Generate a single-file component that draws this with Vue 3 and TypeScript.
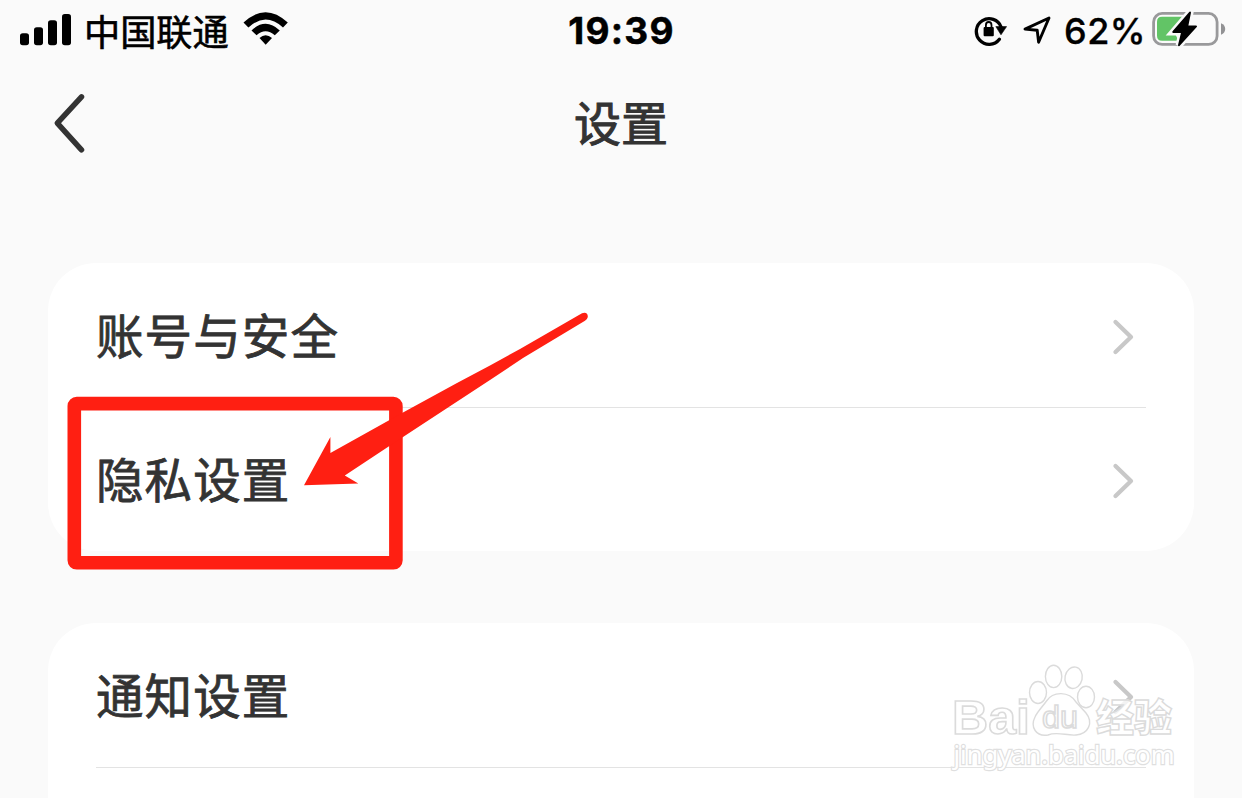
<script setup lang="ts">
interface Group {
  id: string
  open?: boolean
  rows: string[]
}

const groups: Group[] = [
  { id: 'account', rows: ['账号与安全', '隐私设置'] },
  { id: 'notice', open: true, rows: ['通知设置', ''] },
]
</script>

<template>
  <main class="screen">
    <header class="status">
      <div class="carrier">
        <svg class="signal" width="52" height="34" viewBox="0 0 52 34">
          <rect x="0" y="19.3" width="9" height="12" rx="2.8" />
          <rect x="14" y="13.3" width="9" height="18" rx="2.8" />
          <rect x="28" y="6.3" width="9" height="25" rx="2.8" />
          <rect x="42" y="0" width="9" height="31.3" rx="2.8" />
        </svg>
        <span class="operator">中国联通</span>
        <svg class="wifi" width="46" height="34" viewBox="0 0 46 34">
          <path d="M0.5 10.6Q22.5 -10.2 44.8 10.6L40 15.5Q22.5-.3 5.4 15.5Z" />
          <path d="M8.5 18.5Q22.5 5.2 36.8 18.5L31.8 23.2Q22.5 15.2 13.5 23.2Z" />
          <path d="M16.5 26.1Q22.5 20.5 29 26.1L22.7 32.8Z" />
        </svg>
      </div>
      <time class="clock">19:39</time>
      <div class="indicators">
        <svg class="lock" width="33" height="34" viewBox="0 0 33 34">
          <path d="M25.4 26.2A12.8 12.8 0 1 1 27.1 14" fill="none" stroke="#000" stroke-width="3.3" stroke-linecap="round" />
          <path d="M21.8 13.6h10.8L27 21.8Z" stroke="#000" stroke-width="0.6" />
          <rect x="9.6" y="13.9" width="10.2" height="9.4" rx="1" />
          <path d="M11.9 14.4v-2.1a2.8 3.3 0 0 1 5.6 0v2.1" fill="none" stroke="#000" stroke-width="1.8" />
        </svg>
        <svg class="compass" width="29" height="29" viewBox="0 0 29 29">
          <path d="M2 13.1L26 2L15.6 26.2L14.2 14.2Z" fill="none" stroke="#000" stroke-width="2.9" stroke-linejoin="round" />
        </svg>
        <span class="percent">62%</span>
        <svg class="battery" width="75" height="38" viewBox="0 0 75 38">
          <rect x="1.6" y="3.4" width="63.5" height="31" rx="8.5" fill="none" stroke="#99999b" stroke-width="2.8" />
          <path d="M69 13.2Q73.2 15 73.2 19T69 24.8Z" fill="#929294" />
          <path d="M10 6.8H32L21 19.5 26.5 30.8H10Q5 30.8 5 25.8V11.8Q5 6.8 10 6.8Z" fill="#62c466" />
          <path d="M38 2.6L21.3 22H30.2L27 35.2 44 16.4H35.2Z" fill="none" stroke="#fafafa" stroke-width="7" />
          <path d="M38 2.6L21.3 22H30.2L27 35.2 44 16.4H35.2Z" stroke="#000" stroke-width="2" stroke-linejoin="round" />
        </svg>
      </div>
    </header>

    <nav class="nav">
      <svg class="back" width="36" height="64" viewBox="0 0 36 64">
        <path d="M31.5 5.8L7.3 32.2L31.5 58.8" />
      </svg>
      <h1>设置</h1>
    </nav>

    <section v-for="group in groups" :key="group.id" class="card" :class="{ open: group.open }">
      <div v-for="(row, index) in group.rows" :key="index" class="row">
        <span class="label">{{ row }}</span>
        <svg v-if="row" class="chevron" width="24" height="38" viewBox="0 0 24 38">
          <path d="M3.5 4L19 19L3.5 34" />
        </svg>
      </div>
    </section>

    <svg class="marker" width="1242" height="798" viewBox="0 0 1242 798">
      <rect x="74.3" y="403.6" width="321.6" height="159.2" rx="2.5" fill="none" stroke="#ff1f12" stroke-width="13.6" />
      <path d="M582 313.2Q588 311.6 587.8 317Q587.5 319.2 585 320.7L523 358L490 380L403 437L344.8 475.4L358.3 483.6L304 485.3L330.4 437V453L403 412.5L457 383L490 365.5L520 349Z" fill="#ff1f12" />
    </svg>

    <svg class="watermark" width="250" height="130" viewBox="940 650 250 130">
      <g class="outlined">
        <text x="952" y="733.5" class="latin" textLength="78" lengthAdjust="spacingAndGlyphs">Bai</text>
        <ellipse cx="1038" cy="692.5" rx="8.5" ry="11" />
        <ellipse cx="1053.6" cy="676.4" rx="8.2" ry="11.2" />
        <ellipse cx="1073.6" cy="677.7" rx="8.6" ry="10.8" transform="rotate(12 1073.6 677.7)" />
        <ellipse cx="1086" cy="697" rx="8.5" ry="10.7" />
        <path d="M1046.5 701C1053 691 1069 691 1076 702L1086 713C1094 723 1088 734 1076 735C1067 736 1057 731 1048 735C1036 737 1030 727 1035 717C1037 712 1043 706 1046.5 701Z" />
        <text x="1042" y="728" class="du" textLength="36" lengthAdjust="spacingAndGlyphs">du</text>
        <text x="1096" y="731" class="han" textLength="76" lengthAdjust="spacingAndGlyphs">经验</text>
        <text x="953.5" y="764" class="url" textLength="221" lengthAdjust="spacingAndGlyphs">jingyan.baidu.com</text>
      </g>
    </svg>
  </main>
</template>

<style>
html,
body {
  overflow: hidden;
  background: #fafafa;
}
</style>

<style scoped>
.screen {
  position: relative;
  width: 1242px;
  height: 798px;
  overflow: hidden;
  background: #fafafa;
  color: #333;
  font-family: 'Noto Sans CJK SC', sans-serif;
}
svg {
  display: block;
  flex: none;
}
.status {
  display: grid;
  grid-template-columns: 1fr auto 1fr;
  align-items: center;
  height: 62px;
  padding: 0 15px 0 20px;
  box-sizing: border-box;
  color: #000;
}
.carrier,
.indicators {
  display: flex;
  align-items: center;
}
.operator {
  margin: -3px 0 0 12px;
  width: 147px;
  font-size: 36.2px;
  line-height: 60px;
  white-space: nowrap;
  -webkit-text-stroke: 0.6px #000;
}
.wifi {
  margin: -4px 0 0 12px;
}
.clock {
  margin: 0 4px 0 0;
  font: 700 37px/62px Inter, sans-serif;
  letter-spacing: 1.2px;
  -webkit-text-stroke: 0.5px #000;
}
.indicators {
  justify-content: flex-end;
}
.lock {
  margin-top: -3px;
}
.compass {
  margin: -2px 0 0 16px;
}
.percent {
  margin: -1px 0 0 12px;
  width: 80px;
  font: 500 36px/62px Inter, sans-serif;
  letter-spacing: 0.5px;
  -webkit-text-stroke: 0.3px #000;
  white-space: nowrap;
}
.battery {
  margin: -4px 0 0 8px;
}
.nav {
  display: grid;
  grid-template-columns: 1fr auto 1fr;
  align-items: center;
  height: 124px;
  padding: 0 50px;
  margin-bottom: 77px;
}
.back {
  margin-top: -2px;
}
.back path {
  fill: none;
  stroke: #333;
  stroke-width: 5.5;
  stroke-linecap: round;
  stroke-linejoin: round;
}
h1 {
  margin: -6px 0 0;
  font-size: 47px;
  font-weight: 400;
  line-height: 118px;
  -webkit-text-stroke: 1px #333;
}
.card {
  width: 1146px;
  margin: 0 0 72px 48px;
  padding: 0 48px;
  box-sizing: border-box;
  border-radius: 48px;
  background: #fff;
}
.card.open {
  border-radius: 48px 48px 0 0;
}
.row {
  display: flex;
  align-items: center;
  justify-content: space-between;
  height: 144px;
  padding-right: 10px;
  box-sizing: border-box;
  font-size: 47.5px;
  letter-spacing: 1.1px;
  -webkit-text-stroke: 0.8px #333;
  position: relative;
}
.label {
  padding-bottom: 4px;
}
.row + .row::before {
  content: '';
  position: absolute;
  top: 0;
  left: 0;
  right: 0;
  height: 1px;
  background: #e3e3e3;
}
.chevron {
  margin-top: 4px;
}
.chevron path {
  fill: none;
  stroke: #c8c8c8;
  stroke-width: 4.3;
  stroke-linecap: round;
  stroke-linejoin: round;
}
.marker {
  position: absolute;
  inset: 0;
}
.watermark {
  position: absolute;
  left: 940px;
  top: 650px;
}
.outlined {
  fill: rgba(255, 255, 255, 0.8);
  stroke: #dbdbdb;
  stroke-width: 1.4px;
  -webkit-text-stroke: 0;
}
.latin {
  font: 700 49px 'Liberation Sans', sans-serif;
  stroke-width: 1.6px;
}
.du {
  font: 400 31px 'Liberation Sans', sans-serif;
  stroke-width: 1.6px;
}
.han {
  font: 900 38px 'Noto Sans CJK SC', sans-serif;
}
.url {
  font: 400 26px 'Noto Sans', sans-serif;
  stroke-width: 2.4px;
  stroke: #dfdfdf;
  fill: #fff;
  paint-order: stroke;
}
</style>
